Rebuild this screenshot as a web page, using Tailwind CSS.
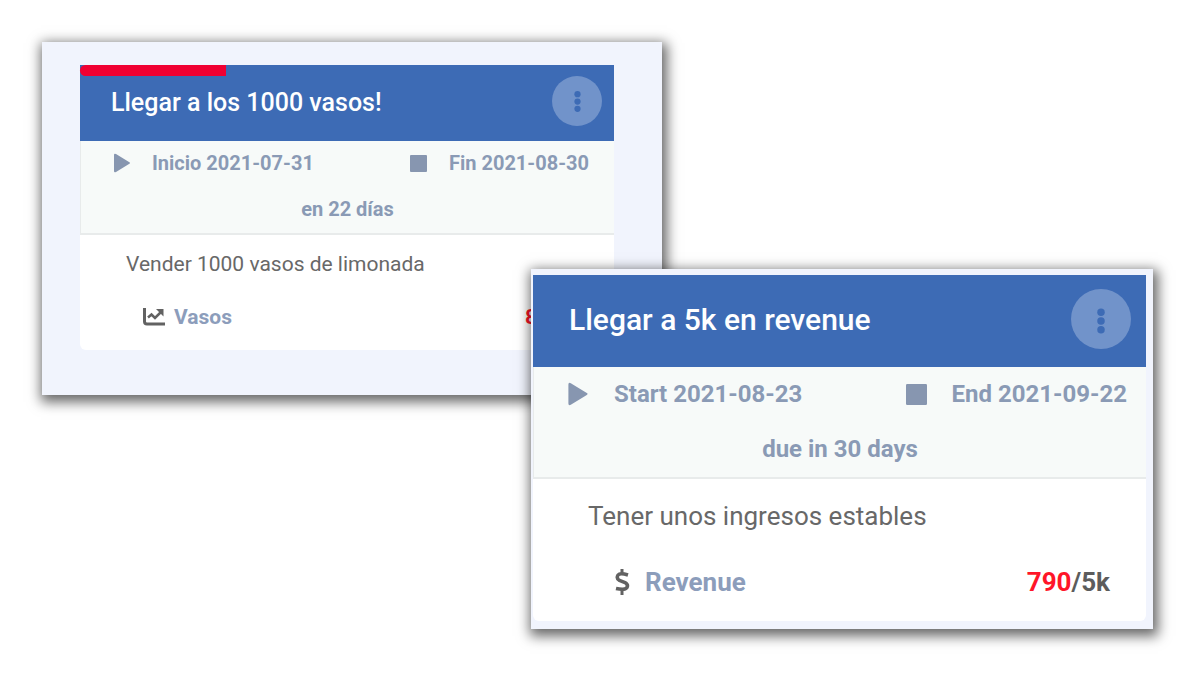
<!DOCTYPE html>
<html lang="es">
<head>
    <meta charset="UTF-8">
    <meta name="viewport" content="width=device-width, initial-scale=1.0">
    <script src="https://cdn.jsdelivr.net/npm/@tailwindcss/browser@4"></script>
    <title>Objetivos</title>
</head>
<body class="bg-white font-['Roboto',sans-serif]">

<main class="flex flex-col pt-[42px] pl-[42px] pr-[47px] pb-10">

  <!-- Vasos -->
  <section class="w-full max-w-[620px] bg-[#f1f4fd] pt-[23px] pl-[38px] pr-12 pb-[45px] shadow-[2px_4px_12px_3px_rgba(0,0,0,0.6)]">
    <article class="bg-white rounded-b-md">
      <header class="relative h-[76px] bg-[#3d6bb5] flex items-start justify-between pt-[11px] pl-[31px] pr-3">
        <div class="absolute top-0 left-0 h-[11px] bg-[#f00032] rounded-l-full" style="width: 27.4%"></div>
        <h2 class="text-white text-[25px] leading-[54px] font-medium">Llegar a los 1000 vasos!</h2>
        <button type="button" aria-label="Opciones" class="w-[50px] h-[50px] rounded-full bg-[#7193ca] flex items-center justify-center">
          <svg class="w-[25px] h-[25px]" viewBox="0 0 24 24" fill="#3d6bb5"><circle cx="12" cy="5" r="3"/><circle cx="12" cy="12" r="3"/><circle cx="12" cy="19" r="3"/></svg>
        </button>
      </header>
      <div class="h-[94px] bg-[#f7faf9] border-l border-b-2 border-[#e8ebeb] text-[#8a9ab5] text-[20px] leading-6 font-bold pt-[10px]">
        <div class="flex items-center justify-between pl-8 pr-[25px]">
          <div class="flex items-center gap-[21px]">
            <svg class="w-[18px] h-5" viewBox="0 0 18 20" fill="#8796b0"><path d="M1 2Q1 0 3 1L16 9Q18 10 16 11L3 19Q1 20 1 18Z"/></svg>
            <span>Inicio 2021-07-31</span>
          </div>
          <div class="flex items-center gap-[22px]">
            <svg class="w-[17px] h-[17px]" viewBox="0 0 18 18" fill="#8796b0"><rect width="18" height="18" rx="1"/></svg>
            <span>Fin 2021-08-30</span>
          </div>
        </div>
        <p class="text-center mt-[22px]">en 22 días</p>
      </div>
      <div class="h-[115px] pt-[15px] px-[46px]">
        <p class="text-[#686868] text-[21px] leading-7">Vender 1000 vasos de limonada</p>
        <div class="flex items-center justify-between mt-[27px] pl-4 text-[21px] leading-6 font-bold">
          <div class="flex items-center gap-2">
            <svg class="w-6 h-5" viewBox="0 0 24 20" fill="none" stroke="#626262" stroke-width="3"><path d="M2.500 1V14.500Q2.500 17 5 17H23"/><path d="M6 10.500L9.500 7.500L13 11L19 5" stroke-width="2.500"/><path d="M14 2H21.500V9.500Z" fill="#626262" stroke="none"/></svg>
            <span class="text-[#8c9dbb]">Vasos</span>
          </div>
          <span class="text-[#5c5c5c]"><span class="text-[#ff1528]">8</span>/1k</span>
        </div>
      </div>
    </article>
  </section>

  <!-- Revenue -->
  <section class="relative self-end w-full max-w-[622px] -mt-[126px] bg-[#f1f4fd] pt-[6px] pl-0.5 pr-[7px] pb-2 shadow-[2px_4px_12px_3px_rgba(0,0,0,0.6)]">
    <article class="bg-white rounded-b-md">
      <header class="h-[92px] bg-[#3d6bb5] flex items-start justify-between pt-[14px] pl-9 pr-[15px]">
        <h2 class="text-white text-[30px] leading-[62px] font-medium">Llegar a 5k en revenue</h2>
        <button type="button" aria-label="Options" class="w-[60px] h-[60px] rounded-full bg-[#7193ca] flex items-center justify-center">
          <svg class="w-[30px] h-[30px] mt-1" viewBox="0 0 24 24" fill="#3d6bb5"><circle cx="12" cy="5" r="3"/><circle cx="12" cy="12" r="3"/><circle cx="12" cy="19" r="3"/></svg>
        </button>
      </header>
      <div class="h-[112px] bg-[#f7faf9] border-l border-b-2 border-[#e8ebeb] text-[#8a9ab5] text-[24px] leading-7 font-bold pt-[13px]">
        <div class="flex items-center justify-between pl-[33px] pr-[19px]">
          <div class="flex items-center gap-[25px]">
            <svg class="w-[22px] h-6" viewBox="0 0 18 20" fill="#8796b0"><path d="M1 2Q1 0 3 1L16 9Q18 10 16 11L3 19Q1 20 1 18Z"/></svg>
            <span>Start 2021-08-23</span>
          </div>
          <div class="flex items-center gap-[25px]">
            <svg class="w-[21px] h-[21px]" viewBox="0 0 18 18" fill="#8796b0"><rect width="18" height="18" rx="1"/></svg>
            <span>End 2021-09-22</span>
          </div>
        </div>
        <p class="text-center mt-[27px]">due in 30 days</p>
      </div>
      <div class="h-[142px] pt-[21px] pl-[55px] pr-9">
        <p class="text-[#686868] text-[26px] leading-8">Tener unos ingresos estables</p>
        <div class="flex items-center justify-between mt-[34px] pl-[26px] text-[26px] leading-8 font-bold">
          <div class="flex items-center gap-[15px]">
            <svg class="w-4 h-[26px]" viewBox="0 0 16 26" fill="none" stroke="#626262" stroke-width="3.500"><path d="M14 6Q6 3.500 4 6Q2 9.500 5.500 11.500L11 13.500Q14.500 15.500 13 18.500Q11 21.500 2 19.500"/><path d="M8 0V5M8 20V26" stroke-width="3"/></svg>
            <span class="text-[#8c9dbb]">Revenue</span>
          </div>
          <span class="text-[#5c5c5c]"><span class="text-[#ff1528]">790</span>/5k</span>
        </div>
      </div>
    </article>
  </section>

</main>
</body>
</html>
